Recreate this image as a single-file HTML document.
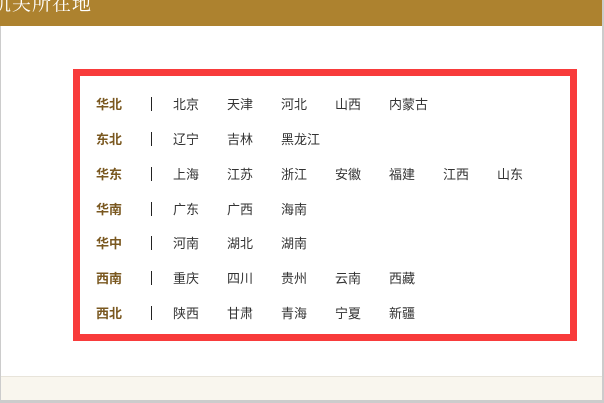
<!DOCTYPE html>
<html><head><meta charset="utf-8"><style>
body{margin:0;width:604px;height:403px;overflow:hidden;background:#fff;position:relative;font-family:"Liberation Sans","Noto Sans CJK SC",sans-serif;}
.hdr{position:absolute;left:0;top:0;width:604px;height:26px;background:#ad822f;color:#fff;font-family:"Liberation Serif","Noto Serif CJK SC",serif;font-size:19px;line-height:20px;}
.hdr span{position:absolute;left:-8px;top:-5px;letter-spacing:1px}
.lb{position:absolute;left:0;top:26px;width:1px;height:377px;background:#ccc}
.rb{position:absolute;left:602px;top:0;width:2px;height:403px;background:#ccc}
.box{position:absolute;left:73px;top:69px;width:490px;height:258px;border:7px solid #f83b3b;}
.row{position:absolute;left:0;width:480px;height:20px;font-size:13px;color:#333;}
.row b{position:absolute;left:16px;color:#7a5820;font-weight:bold;top:0;white-space:nowrap}
.row i{position:absolute;left:71px;top:3px;width:1px;height:14px;background:#222}
.row span{position:absolute;top:0;white-space:nowrap}
.ft{position:absolute;left:1px;top:376px;width:601px;height:24px;background:#f9f6ee;border-top:1px solid #e8e4da}
.fb{position:absolute;left:0;top:400px;width:604px;height:3px;background:#ccc}
</style></head><body>
<div class="hdr"><span>机关所在地</span></div>
<div class="lb"></div><div class="rb"></div>
<div class="box">
<div class="row" style="top:18px"><b>华北</b><i></i><span style="left:93px">北京</span><span style="left:147px">天津</span><span style="left:201px">河北</span><span style="left:255px">山西</span><span style="left:309px">内蒙古</span></div>
<div class="row" style="top:53px"><b>东北</b><i></i><span style="left:93px">辽宁</span><span style="left:147px">吉林</span><span style="left:201px">黑龙江</span></div>
<div class="row" style="top:88px"><b>华东</b><i></i><span style="left:93px">上海</span><span style="left:147px">江苏</span><span style="left:201px">浙江</span><span style="left:255px">安徽</span><span style="left:309px">福建</span><span style="left:363px">江西</span><span style="left:417px">山东</span></div>
<div class="row" style="top:123px"><b>华南</b><i></i><span style="left:93px">广东</span><span style="left:147px">广西</span><span style="left:201px">海南</span></div>
<div class="row" style="top:157px"><b>华中</b><i></i><span style="left:93px">河南</span><span style="left:147px">湖北</span><span style="left:201px">湖南</span></div>
<div class="row" style="top:192px"><b>西南</b><i></i><span style="left:93px">重庆</span><span style="left:147px">四川</span><span style="left:201px">贵州</span><span style="left:255px">云南</span><span style="left:309px">西藏</span></div>
<div class="row" style="top:227px"><b>西北</b><i></i><span style="left:93px">陕西</span><span style="left:147px">甘肃</span><span style="left:201px">青海</span><span style="left:255px">宁夏</span><span style="left:309px">新疆</span></div>
</div>
<div class="ft"></div><div class="fb"></div>
</body></html>
